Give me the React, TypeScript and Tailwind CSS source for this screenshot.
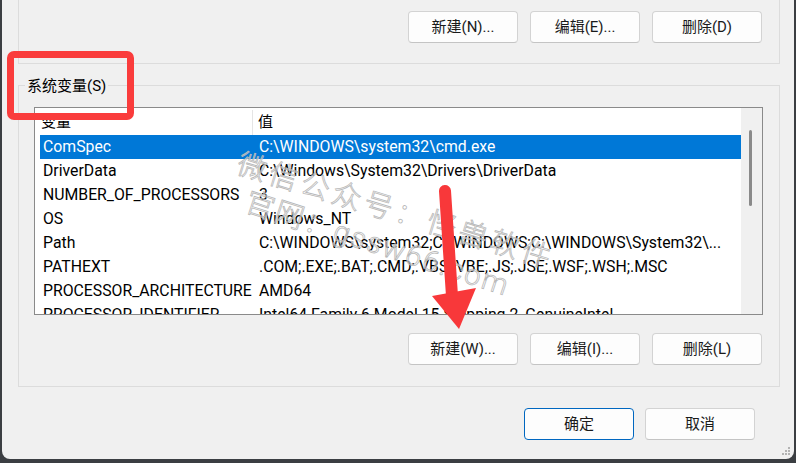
import React from 'react';

const rows: [string, string][] = [
  ['ComSpec', 'C:\\WINDOWS\\system32\\cmd.exe'],
  ['DriverData', 'C:\\Windows\\System32\\Drivers\\DriverData'],
  ['NUMBER_OF_PROCESSORS', '3'],
  ['OS', 'Windows_NT'],
  ['Path', 'C:\\WINDOWS\\system32;C:\\WINDOWS;C:\\WINDOWS\\System32\\...'],
  ['PATHEXT', '.COM;.EXE;.BAT;.CMD;.VBS;.VBE;.JS;.JSE;.WSF;.WSH;.MSC'],
  ['PROCESSOR_ARCHITECTURE', 'AMD64'],
  ['PROCESSOR_IDENTIFIER', 'Intel64 Family 6 Model 15 Stepping 2, GenuineIntel'],
];

const Btn = ({ label, primary }: { label: string; primary?: boolean }) => (
  <button
    className={
      primary
        ? 'w-[110px] h-[32px] rounded-[4px] bg-[#fdfdfd] border border-[#0067c0] text-[15px] text-[#1a1a1a]'
        : 'w-[110px] h-[32px] rounded-[4px] bg-[#fdfdfd] border border-[#d3d3d3] border-b-[#c4c4c4] text-[15px] text-[#1a1a1a]'
    }
  >
    {label}
  </button>
);

export default function App() {
  return (
    <div
      className="relative w-[796px] h-[463px] bg-[#3b3e42] overflow-hidden"
      style={{ fontFamily: 'Roboto, "Noto Sans CJK SC", sans-serif' }}
    >
      {/* dialog */}
      <div className="ml-[2px] w-[792px] h-[459px] bg-[#f0f0f0] rounded-bl-[8px] rounded-br-[8px] pl-[16px]">
        {/* user variables group (cut off at top) */}
        <div className="w-[762px] h-[64px] border-x border-b border-[#dcdcdc] flex justify-end gap-3 pt-[11px] pr-[17px]">
          <Btn label="新建(N)..." />
          <Btn label="编辑(E)..." />
          <Btn label="删除(D)" />
        </div>

        {/* system variables group */}
        <div className="relative mt-[21px] w-[762px] h-[302px] border border-[#dcdcdc] pt-[21px] pl-[15px]">
          <span className="absolute -top-[9px] left-[6px] px-[2px] bg-[#f0f0f0] text-[15px] text-black leading-[18px]">
            系统变量(S)
          </span>

          <div className="w-[729px] h-[208px] border border-[#8a8a8a] bg-white flex overflow-hidden">
            <div className="w-[706px] pl-[5px] overflow-hidden">
              <div className="h-[27px] flex items-center pt-[2px] text-[15px] text-black">
                <div className="w-[213px] pl-[1px] border-r border-[#e5e5e5] h-full flex items-center">变量</div>
                <div className="pl-[5px]">值</div>
              </div>
              {rows.map(([name, value], i) => (
                <div
                  key={name}
                  className={
                    i === 0
                      ? 'h-[24px] flex items-center bg-[#0078d7] text-white text-[15.8px] whitespace-nowrap'
                      : 'h-[24px] flex items-center text-black text-[15.8px] whitespace-nowrap'
                  }
                >
                  <div className="w-[216px] pl-[3px] shrink-0">{name}</div>
                  <div className="pl-[3px]">{value}</div>
                </div>
              ))}
            </div>
            <div className="w-[21px] bg-[#f0f0f0] pl-[8px] pt-[22px]">
              <div className="w-[3px] h-[76px] bg-[#8a8a8a] rounded-full" />
            </div>
          </div>

          <div className="mt-[18px] flex justify-end gap-3 pr-[17px]">
            <Btn label="新建(W)..." />
            <Btn label="编辑(I)..." />
            <Btn label="删除(L)" />
          </div>
        </div>

        <div className="mt-[21px] flex justify-end gap-[11px] pr-[39px]">
          <Btn label="确定" primary />
          <Btn label="取消" />
        </div>
      </div>

      {/* watermark */}
      <div className="absolute left-[238px] top-[142px] rotate-[17deg] origin-left text-[29px] font-light text-white/40 [-webkit-text-stroke:0.8px_#b8b8b8] tracking-[4px] whitespace-nowrap pointer-events-none">
        微信公众号：怪兽软件
      </div>
      <div className="absolute left-[246px] top-[180px] rotate-[18deg] origin-left text-[29px] font-light text-white/40 [-webkit-text-stroke:0.8px_#b8b8b8] tracking-[2px] whitespace-nowrap pointer-events-none">
        官网：gssw66.com
      </div>

      {/* highlight box */}
      <div className="absolute left-[7px] top-[51px] w-[127px] h-[69px] border-[7px] border-[#fa3c3c] rounded-[7px]" />

      {/* arrow */}
      <svg className="absolute left-0 top-0" width="796" height="463" viewBox="0 0 796 463">
        <line x1="445" y1="191" x2="452" y2="296" stroke="#f8383a" strokeWidth="12" strokeLinecap="round" />
        <polygon points="432,296 476,288 459,329" fill="#f8383a" />
      </svg>

      {/* resize grip */}
      <svg className="absolute left-[778px] top-[445px]" width="14" height="14" viewBox="0 0 14 14">
        <rect x="10" y="2" width="2" height="2" fill="#b3b3b3" />
        <rect x="7" y="5" width="2" height="2" fill="#b3b3b3" />
        <rect x="10" y="5" width="2" height="2" fill="#b3b3b3" />
        <rect x="4" y="8" width="2" height="2" fill="#b3b3b3" />
        <rect x="7" y="8" width="2" height="2" fill="#b3b3b3" />
        <rect x="10" y="8" width="2" height="2" fill="#b3b3b3" />
      </svg>
    </div>
  );
}
